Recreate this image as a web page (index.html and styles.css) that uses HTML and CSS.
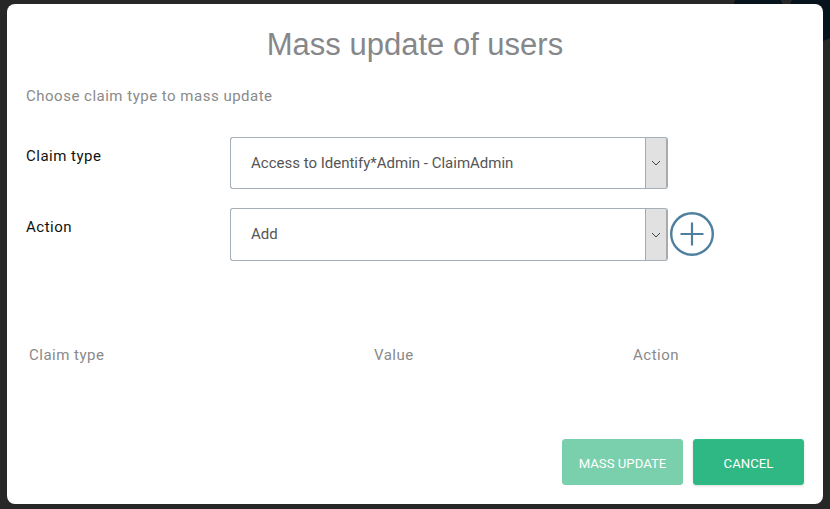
FILE: index.html
```html
<!DOCTYPE html>
<html lang="en">
<head>
  <meta charset="UTF-8">
  <title>Mass update of users</title>
  <link rel="stylesheet" href="styles.css">
</head>
<body>
  <div class="modal">
    <h1>Mass update of users</h1>
    <p class="subtitle">Choose claim type to mass update</p>

    <div class="form-row first">
      <label>Claim type</label>
      <div class="select">
        <span class="select-value">Access to Identify*Admin - ClaimAdmin</span>
        <span class="select-arrow">
          <svg width="10" height="6" viewBox="0 0 10 6"><path d="M1 1l4 4 4-4" fill="none" stroke="#444" stroke-width="1"/></svg>
        </span>
      </div>
    </div>

    <div class="form-row second">
      <label>Action</label>
      <div class="select tall">
        <span class="select-value">Add</span>
        <span class="select-arrow">
          <svg width="10" height="6" viewBox="0 0 10 6"><path d="M1 1l4 4 4-4" fill="none" stroke="#444" stroke-width="1"/></svg>
        </span>
      </div>
      <button class="add-button">
        <svg width="44" height="44" viewBox="0 0 44 44">
          <circle cx="22" cy="22" r="20.8" fill="none" stroke="#4f7f9e" stroke-width="2.4"/>
          <path d="M10.5 22h23M22 10.5v23" fill="none" stroke="#4f7f9e" stroke-width="2.2"/>
        </svg>
      </button>
    </div>

    <div class="table-head">
      <span class="col-type">Claim type</span>
      <span class="col-value">Value</span>
      <span class="col-action">Action</span>
    </div>

    <div class="footer">
      <button class="button disabled">MASS UPDATE</button>
      <button class="button cancel">CANCEL</button>
    </div>
  </div>
</body>
</html>
```

FILE: styles.css
```css
html, body {
  height: 100%;
}

body {
  margin: 0;
  padding: 4px 7px 5px;
  box-sizing: border-box;
  background-color: #272727;
  background-image:
    radial-gradient(circle 24px at 758px 6px, #07131c 99%, transparent),
    radial-gradient(circle 28px at 816px 14px, #07131c 99%, transparent);
  background-repeat: no-repeat;
  font-family: Roboto, sans-serif;
  overflow: hidden;
}

.modal {
  display: flex;
  flex-direction: column;
  height: 100%;
  box-sizing: border-box;
  padding: 0 19px 19px;
  background: #fff;
  border-radius: 8px;
}

h1 {
  margin: 23px 0 0;
  font-family: "Liberation Sans", Arial, sans-serif;
  font-size: 31px;
  font-weight: 400;
  line-height: 36px;
  text-align: center;
  color: #86878a;
}

.subtitle {
  margin: 23px 0 0;
  font-size: 15px;
  line-height: 20px;
  letter-spacing: 0.5px;
  color: #8a8a8a;
}

.form-row {
  display: flex;
  align-items: flex-start;
}

.form-row.first {
  margin-top: 31px;
}

.form-row.second {
  margin-top: 19px;
}

label {
  width: 204px;
  padding-top: 9px;
  font-size: 15px;
  line-height: 20px;
  letter-spacing: 0.5px;
  color: #111;
}

.select {
  display: flex;
  width: 438px;
  height: 52px;
  box-sizing: border-box;
  border: 1px solid #a6afb5;
  border-right-color: #aaa;
  border-radius: 3px;
}

.select.tall {
  height: 53px;
}

.select-value {
  flex: 1;
  align-self: center;
  padding-left: 20px;
  font-size: 15px;
  color: #555;
}

.select.tall .select-value {
  padding-bottom: 2px;
}

.select-arrow {
  display: flex;
  align-items: center;
  justify-content: center;
  width: 20px;
  background-color: #e1e1e1;
  border-left: 1px solid #a9a9a9;
  border-right: 1px solid #aaa;
  border-radius: 0 2px 2px 0;
}

.add-button {
  width: 44px;
  height: 44px;
  margin: 4px 0 0 2px;
  padding: 0;
  border: none;
  background: none;
  cursor: pointer;
}

.table-head {
  display: flex;
  margin-top: 84px;
  padding-left: 3px;
  font-size: 15px;
  line-height: 20px;
  letter-spacing: 0.5px;
  color: #8a8a8a;
}

.col-type {
  width: 345px;
}

.col-value {
  width: 259px;
}

.footer {
  display: flex;
  justify-content: flex-end;
  gap: 10px;
  margin-top: auto;
}

.button {
  width: 121px;
  height: 46px;
  padding: 2px 0 0;
  font-family: Roboto, sans-serif;
  font-size: 13.2px;
  color: #fff;
  background-color: #2fb784;
  border: 1px solid #2ebd85;
  border-radius: 3px;
  box-shadow: 0 1px 3px rgba(0,0,0,0.15);
  cursor: pointer;
}

.button.cancel {
  width: 111px;
}

.button.disabled {
  background-color: #7ad0ad;
  border-color: #7ad0ad;
  box-shadow: none;
  cursor: default;
}
```
